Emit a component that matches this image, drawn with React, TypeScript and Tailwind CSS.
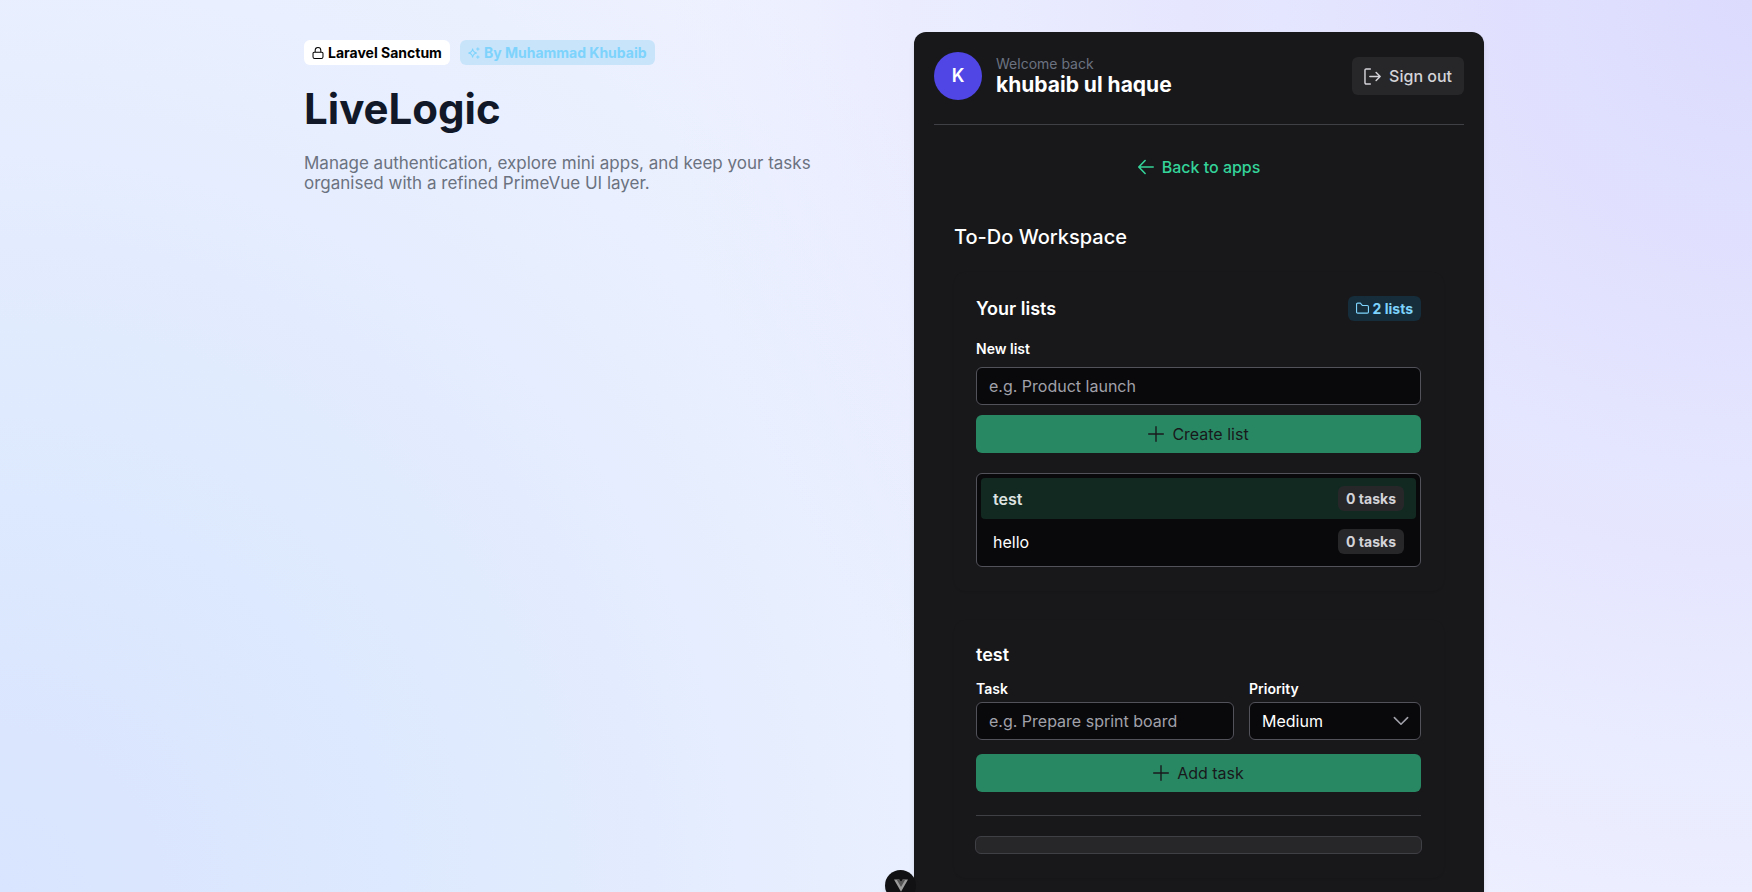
import React from "react";

type IconProps = { className?: string; children: React.ReactNode };

function Icon({ className, children }: IconProps) {
  return (
    <svg viewBox="0 0 14 14" fill="none" stroke="currentColor" strokeWidth="1.2" strokeLinecap="round" strokeLinejoin="round" aria-hidden="true" className={className}>
      {children}
    </svg>
  );
}

const Plus = () => (
  <Icon className="size-4 shrink-0">
    <path d="M7 .6v12.800M.6 7h12.800" />
  </Icon>
);

const fieldClass =
  "h-[38px] w-full min-w-0 rounded-md border border-[#52525b] bg-[#09090b] px-3 text-base text-white placeholder:text-[#a1a1aa] outline-none";
const solidClass =
  "flex h-[38px] w-full items-center justify-center gap-2 rounded-md bg-[#298864] text-base text-[#18181b]";
const labelClass = "text-sm leading-[17px] font-semibold text-white";
const tagClass = "flex h-[25px] items-center gap-1 rounded-md px-2 text-sm font-bold whitespace-nowrap";

function ListOption({ name, count, selected }: { name: string; count: string; selected?: boolean }) {
  return (
    <li
      role="option"
      aria-selected={!!selected}
      className={
        selected
          ? "flex h-[41px] items-center justify-between rounded-sm bg-[#112920] px-3 font-semibold text-[#dee3e1]"
          : "flex h-[41px] items-center justify-between rounded-sm px-3 text-white"
      }
    >
      <span>{name}</span>
      <span className={`${tagClass} bg-[#27272a] text-[#d4d4d8]`}>{count}</span>
    </li>
  );
}

export default function App() {
  return (
    <div className="h-screen overflow-hidden bg-[#eff2ff] bg-[radial-gradient(circle_at_top_right,#dcdbfe_0%,transparent_55%),radial-gradient(circle_at_bottom_left,#d9e4fe_0%,#dde9fe_20%,#e7eefe_42%,transparent_60%)] font-[Inter,sans-serif] text-base">
      <div className="mx-auto grid w-full max-w-[1216px] grid-cols-[minmax(0,1fr)_570px] gap-10 pt-8 pl-9">
        <header className="pt-2">
          <div className="flex gap-[10px]">
            <span className={`${tagClass} bg-white text-black`}>
              <Icon className="size-3 shrink-0">
                <path d="M3.700 6V4a3.300 3.300 0 0 1 6.600 0v2M2.500 6h9A1.300 1.300 0 0 1 12.800 7.300v4.400A1.800 1.800 0 0 1 11 13.400H3a1.800 1.800 0 0 1-1.800-1.700V7.300A1.300 1.300 0 0 1 2.500 6Z" />
              </Icon>
              Laravel Sanctum
            </span>
            <span className={`${tagClass} bg-[#c8e4fb] text-[#7dd3fc]`}>
              <Icon className="size-3 shrink-0">
                <path d="M5.400 2.200c.5 3.200 1.600 4.300 4.600 4.900-3 .6-4.100 1.700-4.600 4.900C4.900 8.800 3.800 7.700.8 7.100c3-.6 4.100-1.700 4.600-4.900ZM11.500.8v3M10 2.300h3M11.500 10.200v3M10 11.700h3" />
              </Icon>
              By Muhammad Khubaib
            </span>
          </div>
          <h1 className="mt-[19px] text-[42px] leading-[50px] font-bold text-[#111827]">LiveLogic</h1>
          <p className="mt-[19px] max-w-[520px] text-[17px] leading-5 text-[#6b7280]">
            Manage authentication, explore mini apps, and keep your tasks organised with a refined PrimeVue UI layer.
          </p>
        </header>

        <main className="min-h-screen rounded-xl bg-[#18181b] p-5 text-white shadow-md">
          <div className="flex items-center justify-between">
            <div className="flex items-center gap-[14px]">
              <span className="flex size-12 items-center justify-center rounded-full bg-[#4f46e5] text-lg font-semibold">K</span>
              <div>
                <p className="text-sm leading-[18px] text-[#6b7280]">Welcome back</p>
                <h2 className="text-[21px] leading-6 font-bold">khubaib ul haque</h2>
              </div>
            </div>
            <button type="button" className="flex h-[38px] items-center gap-2 rounded-md bg-[#27272a] px-3 font-medium text-[#d4d4d8]">
              <Icon className="size-[17px] shrink-0">
                <path d="M5.200.800H1.800A1 1 0 0 0 .800 1.800v10.400A1 1 0 0 0 1.800 13.200h3.400M4.800 7h8.500M10 3.700 13.300 7 10 10.300" />
              </Icon>
              Sign out
            </button>
          </div>

          <hr className="mt-6 border-[#3f3f46]" />

          <div className="mt-[23px] flex justify-center">
            <a href="#apps" className="flex h-[38px] items-center gap-2 font-medium text-[#34d399]">
              <Icon className="size-4 shrink-0">
                <path strokeWidth="1.400" d="M13.300 7H.8M6.200 1.300.700 7l5.500 5.700" />
              </Icon>
              Back to apps
            </a>
          </div>

          <div className="px-5 pt-[39px]">
            <h2 className="text-xl leading-6 font-medium">To-Do Workspace</h2>

            <section className="mt-[23px] rounded-xl py-6 pr-[23px] pl-[22px] shadow-[0_1px_2px_rgba(0,0,0,0.08)]">
              <div className="flex items-center justify-between">
                <h3 className="text-lg leading-[22px] font-semibold">Your lists</h3>
                <span className={`${tagClass} bg-[#162d3b] text-[#7dd3fc]`}>
                  <Icon className="size-[13px] shrink-0">
                    <path d="M1.800 1.200h2.900L7 3.800h5.200a1.200 1.200 0 0 1 1.200 1.200v5.800a1.200 1.200 0 0 1-1.200 1.200H1.800A1.200 1.200 0 0 1 .6 10.800V2.400a1.200 1.200 0 0 1 1.200-1.200Z" />
                  </Icon>
                  2 lists
                </span>
              </div>
              <form className="mt-[19px] flex flex-col" onSubmit={(e) => e.preventDefault()}>
                <label htmlFor="new-list" className={labelClass}>New list</label>
                <input id="new-list" placeholder="e.g. Product launch" className={`${fieldClass} mt-[10px]`} />
                <button type="submit" className={`${solidClass} mt-[10px]`}>
                  <Plus />
                  Create list
                </button>
              </form>
              <ul role="listbox" aria-label="Your lists" className="mt-5 flex h-[94px] flex-col gap-[2px] rounded-md border border-[#52525b] bg-[#09090b] p-1">
                <ListOption name="test" count="0 tasks" selected />
                <ListOption name="hello" count="0 tasks" />
              </ul>
            </section>

            <section className="mt-[29px] rounded-xl py-6 pr-[23px] pl-[22px] shadow-[0_1px_2px_rgba(0,0,0,0.08)]">
              <h3 className="text-lg leading-[22px] font-semibold">test</h3>
              <form onSubmit={(e) => e.preventDefault()}>
                <div className="mt-[14px] grid grid-cols-[3fr_2fr] gap-[15px]">
                  <div className="flex min-w-0 flex-col gap-[5px]">
                    <label htmlFor="task" className={labelClass}>Task</label>
                    <input id="task" placeholder="e.g. Prepare sprint board" className={fieldClass} />
                  </div>
                  <div className="flex min-w-0 flex-col gap-[5px]">
                    <label htmlFor="priority" className={labelClass}>Priority</label>
                    <div className="relative">
                      <select id="priority" defaultValue="Medium" className={`${fieldClass} appearance-none`}>
                        <option>Low</option>
                        <option>Medium</option>
                        <option>High</option>
                      </select>
                      <Icon className="pointer-events-none absolute top-[11px] right-3 size-4 text-[#a1a1aa]">
                        <path strokeWidth="1.400" d="M1.200 4 7 9.800 12.800 4" />
                      </Icon>
                    </div>
                  </div>
                </div>
                <button type="submit" className={`${solidClass} mt-[14px]`}>
                  <Plus />
                  Add task
                </button>
              </form>
              <hr className="mt-[23px] border-[#3f3f46]" />
              <div className="-mx-px mt-5 h-[18px] rounded-md border border-[#3f3f46] bg-[#27272a]" />
            </section>
          </div>
        </main>
      </div>
      <button type="button" aria-label="Open developer tools" className="fixed -bottom-[9px] left-1/2 ml-[9px] flex size-[31px] items-center justify-center rounded-full bg-[#111113] shadow-md">
        <svg viewBox="0 0 16 14" className="h-[13px] w-[14px]" aria-hidden="true">
          <path d="M0 0h6l2 3.500L10 0h6L8 14Z" fill="#9b9b9b" />
          <path d="M3 0h3.200L8 3.200 9.800 0H13L8 8.700Z" fill="#555" />
        </svg>
      </button>
    </div>
  );
}
